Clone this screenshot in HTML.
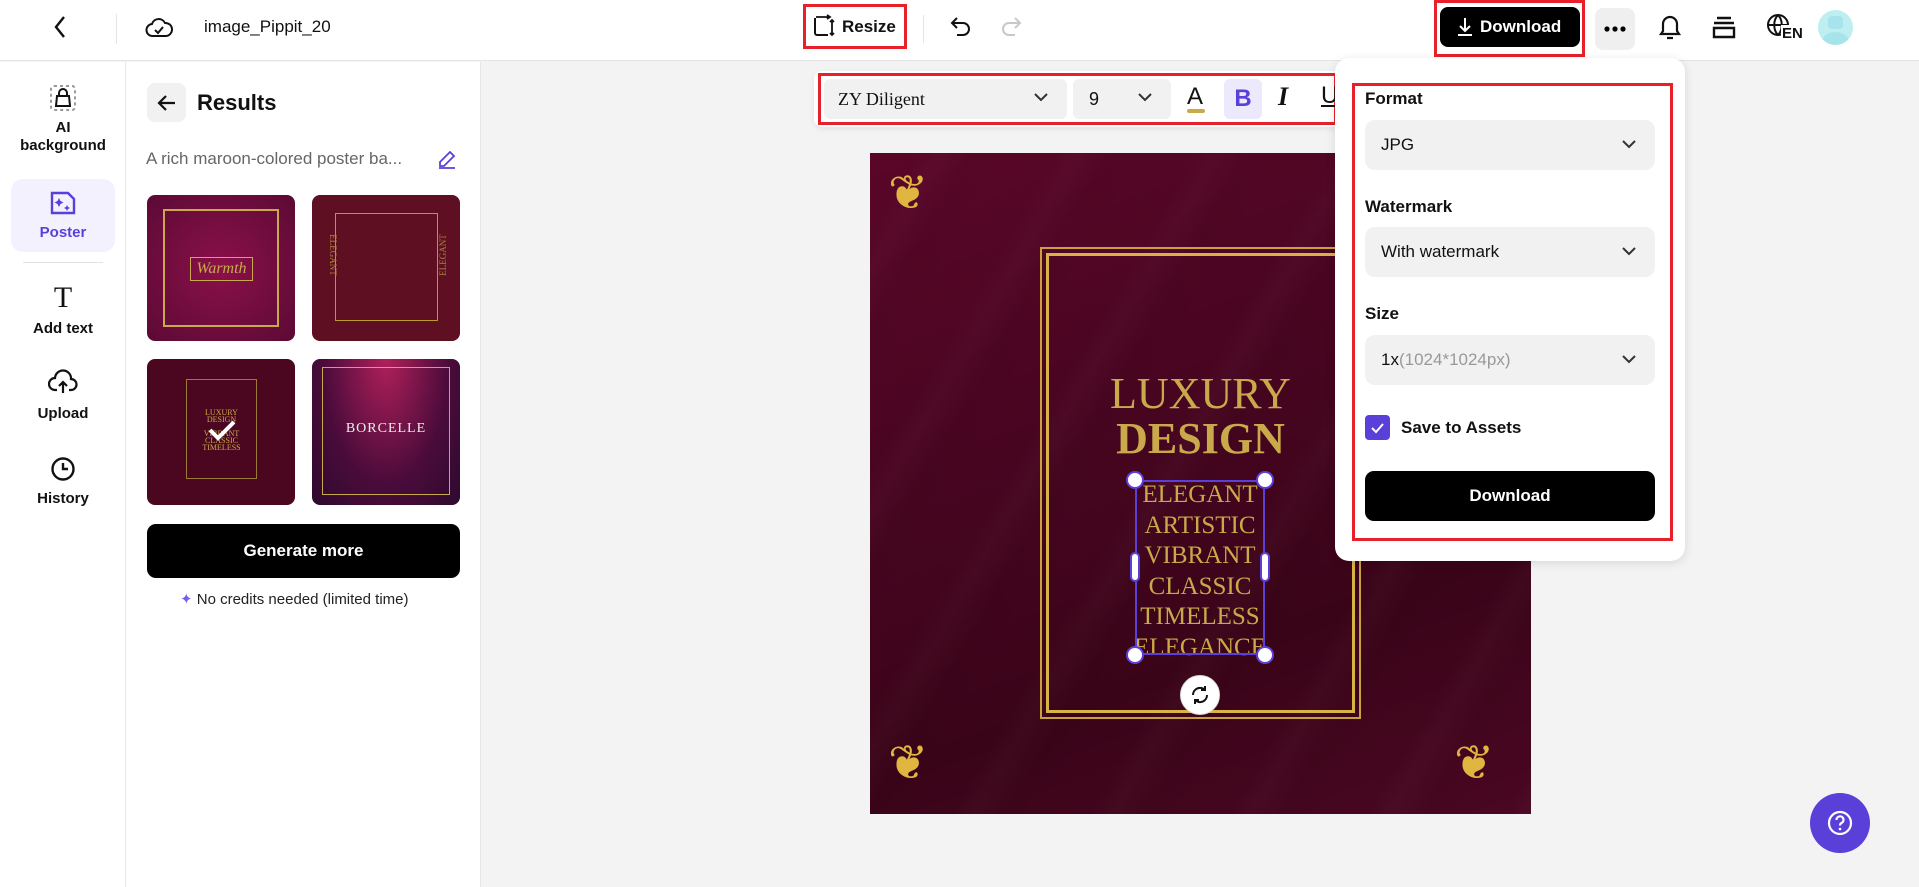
<!DOCTYPE html>
<html><head><meta charset="utf-8"><style>
*{box-sizing:border-box;margin:0;padding:0}
body{width:1919px;height:887px;overflow:hidden;background:#f3f3f3;font-family:"Liberation Sans",Arial,sans-serif;color:#111;position:relative}
.abs{position:absolute}
.top{left:0;top:0;width:1919px;height:61px;background:#fff;border-bottom:1px solid #e4e4e4}
.nav{left:0;top:62px;width:126px;height:825px;background:#fff;border-right:1px solid #e6e6e6}
.panel{left:126px;top:62px;width:355px;height:825px;background:#fff;border-right:1px solid #e6e6e6}
.navi{position:absolute;left:0;width:126px;text-align:center;font-size:15px;font-weight:bold;line-height:18px}
.red{position:absolute;border:3px solid #e8202a}
.sel{position:absolute;left:1365px;width:290px;height:50px;background:#f1f1f1;border-radius:10px;font-size:17px;padding:15px 0 0 16px}
.lbl{position:absolute;left:1365px;font-size:17px;font-weight:bold}
.chev{position:absolute;right:18px;top:18px}
.thumb{position:absolute;width:148px;height:146px;border-radius:8px;overflow:hidden}
.gold{color:#c9a94a;font-family:"Liberation Serif",serif;text-align:center}
</style></head><body>
<div class="abs top"></div>
<svg class="abs" style="left:52px;top:15px" width="16" height="24" viewBox="0 0 16 24"><path d="M12 2 L4 12 L12 22" fill="none" stroke="#111" stroke-width="2.4"/></svg>
<div class="abs" style="left:116px;top:14px;width:1px;height:30px;background:#e5e5e5"></div>
<svg class="abs" style="left:145px;top:14px" width="28" height="28" viewBox="0 0 28 28"><path d="M8 22 A6 6 0 0 1 7 10 A7 7 0 0 1 20 9 A6 6 0 0 1 21 22 Z" fill="none" stroke="#111" stroke-width="2"/><path d="M10 16 l3 3 l5 -6" fill="none" stroke="#111" stroke-width="2"/></svg>
<div class="abs" style="left:204px;top:17px;font-size:17px">image_Pippit_20</div>
<div class="red" style="left:803px;top:4px;width:104px;height:45px"></div>
<svg class="abs" style="left:812px;top:14px" width="24" height="24" viewBox="0 0 24 24"><path d="M3 4 v15 a2 2 0 0 0 2 2 h11" fill="none" stroke="#111" stroke-width="2"/><path d="M4 3 h14 M15 1 l3 2 l-3 2 M20 6 v15 M18 8 l2 -2 l2 2 M18 19 l2 2 l2 -2" fill="none" stroke="#111" stroke-width="1.8"/></svg>
<div class="abs" style="left:842px;top:17px;font-size:17px;font-weight:bold">Resize</div>
<div class="abs" style="left:923px;top:15px;width:1px;height:28px;background:#e5e5e5"></div>
<svg class="abs" style="left:949px;top:14px" width="24" height="24" viewBox="0 0 24 24"><path d="M8 4 L3 9 L8 14 M3 9 H14 a6 6 0 0 1 0 12 H8" fill="none" stroke="#111" stroke-width="2"/></svg>
<svg class="abs" style="left:999px;top:14px" width="24" height="24" viewBox="0 0 24 24"><path d="M16 4 L21 9 L16 14 M21 9 H10 a6 6 0 0 0 0 12 H16" fill="none" stroke="#c8c8c8" stroke-width="2"/></svg>
<div class="red" style="left:1434px;top:0;width:151px;height:57px"></div>
<div class="abs" style="left:1440px;top:7px;width:140px;height:40px;background:#000;border-radius:8px;color:#fff;font-size:17px;font-weight:bold;padding:10px 0 0 40px">Download</div>
<svg class="abs" style="left:1455px;top:16px" width="20" height="22" viewBox="0 0 20 22"><path d="M10 2 v13 M5 10 l5 5 l5 -5 M3 19 h14" fill="none" stroke="#fff" stroke-width="2"/></svg>
<div class="abs" style="left:1595px;top:8px;width:40px;height:42px;background:#efefef;border-radius:8px"></div>
<svg class="abs" style="left:1603px;top:25px" width="24" height="8" viewBox="0 0 24 8"><circle cx="4" cy="4" r="2.6"/><circle cx="12" cy="4" r="2.6"/><circle cx="20" cy="4" r="2.6"/></svg>
<svg class="abs" style="left:1656px;top:12px" width="28" height="30" viewBox="0 0 28 30"><path d="M5 22 h18 l-2 -3 v-7 a7 7 0 0 0 -14 0 v7 z M11 26 h6" fill="none" stroke="#111" stroke-width="2.2"/></svg>
<svg class="abs" style="left:1711px;top:15px" width="26" height="24" viewBox="0 0 26 24"><path d="M6 3 h14 M3 8 h20 M3 13 h20 v9 h-20 z" fill="none" stroke="#111" stroke-width="2.4"/></svg>
<svg class="abs" style="left:1765px;top:12px" width="28" height="30" viewBox="0 0 28 30"><circle cx="13" cy="13" r="10" fill="none" stroke="#111" stroke-width="2"/><path d="M3 13 h20 M13 3 c-5 5 -5 15 0 20 M13 3 c5 5 5 15 0 20" fill="none" stroke="#111" stroke-width="2"/></svg>
<div class="abs" style="left:1781px;top:25px;font-size:15px;font-weight:bold;background:#fff;padding:0 1px">EN</div>
<div class="abs" style="left:1818px;top:10px;width:35px;height:35px;border-radius:50%;background:#bfeef0;overflow:hidden"><div style="position:absolute;left:10px;top:6px;width:15px;height:13px;background:#a7e3ea;border-radius:4px"></div><div style="position:absolute;left:4px;top:22px;width:27px;height:20px;background:#a7e3ea;border-radius:50%"></div></div>

<div class="abs nav"></div>
<svg class="abs" style="left:49px;top:84px" width="28" height="28" viewBox="0 0 28 28"><rect x="2" y="2" width="24" height="24" rx="3" fill="none" stroke="#999" stroke-width="2" stroke-dasharray="3 3"/><path d="M8 12 h12 l1 10 h-14 z M10 12 v-3 a4 4 0 0 1 8 0 v3" fill="none" stroke="#111" stroke-width="2"/></svg>
<div class="navi" style="top:119px">AI<br>background</div>
<div class="abs" style="left:11px;top:179px;width:104px;height:73px;background:#f3f1fe;border-radius:12px"></div>
<svg class="abs" style="left:49px;top:190px" width="28" height="26" viewBox="0 0 28 26"><path d="M3 3 h16 l6 6 v14 h-22 z" fill="none" stroke="#5b3fd9" stroke-width="2.4"/><path d="M10 8 l1.5 3 l3 1.5 l-3 1.5 l-1.5 3 l-1.5 -3 l-3 -1.5 l3 -1.5z M18 15 l1 2 l2 1 l-2 1 l-1 2 l-1 -2 l-2 -1 l2 -1z" fill="#5b3fd9"/></svg>
<div class="navi" style="top:224px;color:#5b3fd9">Poster</div>
<div class="abs" style="left:23px;top:262px;width:80px;height:1px;background:#e3e3e3"></div>
<div class="navi" style="top:283px;font-size:30px;font-weight:normal;font-family:'Liberation Serif',serif;line-height:30px">T</div>
<div class="navi" style="top:320px">Add text</div>
<svg class="abs" style="left:48px;top:369px" width="30" height="26" viewBox="0 0 30 26"><path d="M9 21 h-2 a6 6 0 0 1 0 -12 a8 8 0 0 1 16 1 a5 5 0 0 1 0 11 h-2 M15 24 v-11 M11 17 l4 -4 l4 4" fill="none" stroke="#111" stroke-width="2.2"/></svg>
<div class="navi" style="top:405px">Upload</div>
<svg class="abs" style="left:50px;top:456px" width="26" height="26" viewBox="0 0 26 26"><circle cx="13" cy="13" r="10.5" fill="none" stroke="#111" stroke-width="2.4"/><path d="M13 7 v6 h5" fill="none" stroke="#111" stroke-width="2.4"/></svg>
<div class="navi" style="top:490px">History</div>

<div class="abs panel"></div>
<div class="abs" style="left:147px;top:83px;width:39px;height:39px;background:#f1f1f1;border-radius:8px"></div>
<svg class="abs" style="left:155px;top:91px" width="24" height="24" viewBox="0 0 24 24"><path d="M20 12 H4 M11 5 L4 12 L11 19" fill="none" stroke="#111" stroke-width="2.2"/></svg>
<div class="abs" style="left:197px;top:90px;font-size:22px;font-weight:bold">Results</div>
<div class="abs" style="left:146px;top:149px;font-size:17px;color:#666">A rich maroon-colored poster ba...</div>
<svg class="abs" style="left:437px;top:149px" width="20" height="20" viewBox="0 0 20 20"><path d="M3 17 v-4 l10 -10 l4 4 l-10 10 z M2 19 h16" fill="none" stroke="#5b3fd9" stroke-width="1.8"/></svg>
<div class="thumb" style="left:147px;top:195px;background:radial-gradient(circle,#8a1049,#5c0a35)"><div style="position:absolute;left:16px;top:14px;width:116px;height:118px;border:2px double #c9a94a"></div><div style="position:absolute;left:43px;top:62px;width:63px;height:24px;border:1px solid #c9a94a;color:#c9a94a;font:italic 16px 'Liberation Serif';text-align:center;line-height:22px">Warmth</div></div>
<div class="thumb" style="left:312px;top:195px;background:#5f0f22"><div style="position:absolute;left:23px;top:18px;width:103px;height:108px;border:1px solid #c0962f"></div><div style="position:absolute;left:0;top:55px;font:9px 'Liberation Serif';color:#a8863a;transform:rotate(90deg)">ELEGANT</div><div style="position:absolute;left:110px;top:55px;font:9px 'Liberation Serif';color:#a8863a;transform:rotate(-90deg)">ELEGANT</div></div>
<div class="thumb" style="left:147px;top:359px;background:#4b0720"><div style="position:absolute;left:39px;top:20px;width:71px;height:100px;border:1px solid #9a7a35"></div><div class="gold" style="position:absolute;left:39px;top:50px;width:71px;font-size:8px;line-height:7px">LUXURY<br>DESIGN<br><br>VIBRANT<br>CLASSIC<br>TIMELESS</div><svg style="position:absolute;left:60px;top:60px" width="30" height="22" viewBox="0 0 30 22"><path d="M3 11 l8 8 l16 -16" fill="none" stroke="#fff" stroke-width="4"/></svg></div>
<div class="thumb" style="left:312px;top:359px;background:radial-gradient(ellipse at 50% 0%,#b0205a,#4a0b3b 60%,#2d0a2e)"><div style="position:absolute;left:10px;top:8px;width:128px;height:128px;border:1px solid #c9a94a"></div><div style="position:absolute;left:0;top:62px;width:148px;text-align:center;color:#eee;font:14px 'Liberation Serif';letter-spacing:1px">BORCELLE</div></div>
<div class="abs" style="left:147px;top:524px;width:313px;height:54px;background:#000;border-radius:9px;color:#fff;font-size:17px;font-weight:bold;text-align:center;line-height:54px">Generate more</div>
<div class="abs" style="left:180px;top:590px;font-size:15px;color:#222"><span style="color:#7a5cf0">✦</span> No credits needed (limited time)</div>

<div class="abs" style="left:870px;top:153px;width:661px;height:661px;background:linear-gradient(160deg,#5a0628 0%,#470520 40%,#3a0418 70%,#4a0722 100%);overflow:hidden">
<div style="position:absolute;inset:0;background:repeating-linear-gradient(120deg,rgba(255,255,255,0) 0 40px,rgba(255,255,255,0.018) 60px,rgba(0,0,0,0.03) 90px,rgba(0,0,0,0) 120px)"></div>
<div style="position:absolute;left:170px;top:94px;width:321px;height:472px;border:2px solid #c9a23c"></div>
<div style="position:absolute;left:176px;top:100px;width:309px;height:460px;border:3px solid #d9b444"></div>
<div style="position:absolute;left:18px;top:12px;width:60px;height:60px;color:#e0b640;font-size:48px">❦</div>
<div style="position:absolute;left:18px;top:582px;width:60px;height:60px;color:#e0b640;font-size:48px">❦</div>
<div style="position:absolute;left:584px;top:582px;width:60px;height:60px;color:#e0b640;font-size:48px">❦</div>
<div class="gold" style="position:absolute;left:170px;top:218px;width:321px;font-size:44px;line-height:45px">LUXURY<br><b>DESIGN</b></div>
<div class="gold" style="position:absolute;left:230px;top:327px;width:200px;font-size:25px;line-height:30.5px">ELEGANT<br>ARTISTIC<br>VIBRANT<br>CLASSIC<br>TIMELESS<br>ELEGANCE</div>
</div>
<div class="abs" style="left:1135px;top:480px;width:130px;height:175px;border:2px solid #5b3fd9"></div>
<div class="abs" style="left:1126px;top:471px;width:18px;height:18px;border-radius:50%;background:#fff;border:2px solid #5b3fd9"></div>
<div class="abs" style="left:1256px;top:471px;width:18px;height:18px;border-radius:50%;background:#fff;border:2px solid #5b3fd9"></div>
<div class="abs" style="left:1126px;top:646px;width:18px;height:18px;border-radius:50%;background:#fff;border:2px solid #5b3fd9"></div>
<div class="abs" style="left:1256px;top:646px;width:18px;height:18px;border-radius:50%;background:#fff;border:2px solid #5b3fd9"></div>
<div class="abs" style="left:1130px;top:552px;width:10px;height:30px;border-radius:5px;background:#fff;border:2px solid #5b3fd9"></div>
<div class="abs" style="left:1260px;top:552px;width:10px;height:30px;border-radius:5px;background:#fff;border:2px solid #5b3fd9"></div>
<div class="abs" style="left:1180px;top:675px;width:40px;height:40px;border-radius:50%;background:#fff;border:1px solid #ddd"></div>
<svg class="abs" style="left:1189px;top:684px" width="22" height="22" viewBox="0 0 22 22"><path d="M4 11 a7 7 0 0 1 12 -5 M18 11 a7 7 0 0 1 -12 5 M16 2 v4 h-4 M6 20 v-4 h4" fill="none" stroke="#111" stroke-width="2"/></svg>

<div class="abs" style="left:814px;top:71px;width:540px;height:56px;background:#fff;border-radius:8px;box-shadow:0 2px 6px rgba(0,0,0,.08)"></div>
<div class="red" style="left:818px;top:73px;width:519px;height:52px"></div>
<div class="abs" style="left:824px;top:79px;width:243px;height:40px;background:#f1f1f1;border-radius:6px;font:18px 'Liberation Serif',serif;padding:10px 0 0 14px">ZY Diligent</div>
<svg class="abs" style="left:1033px;top:91px" width="16" height="12" viewBox="0 0 16 12"><path d="M2 3 l6 6 l6 -6" fill="none" stroke="#333" stroke-width="2"/></svg>
<div class="abs" style="left:1073px;top:79px;width:98px;height:40px;background:#f1f1f1;border-radius:6px;font-size:18px;padding:10px 0 0 16px">9</div>
<svg class="abs" style="left:1137px;top:91px" width="16" height="12" viewBox="0 0 16 12"><path d="M2 3 l6 6 l6 -6" fill="none" stroke="#333" stroke-width="2"/></svg>
<div class="abs" style="left:1187px;top:83px;font-size:24px">A</div>
<div class="abs" style="left:1187px;top:109px;width:18px;height:4px;background:#c9a94a;border-radius:2px"></div>
<div class="abs" style="left:1224px;top:79px;width:38px;height:40px;background:#ece9fd;border-radius:6px;color:#5b3fd9;font-size:24px;font-weight:bold;text-align:center;line-height:40px">B</div>
<div class="abs" style="left:1278px;top:82px;font:italic bold 26px 'Liberation Serif',serif">I</div>
<div class="abs" style="left:1321px;top:82px;font-size:24px;text-decoration:underline">U</div>

<div class="abs" style="left:1335px;top:58px;width:350px;height:503px;background:#fff;border-radius:14px;box-shadow:0 2px 10px rgba(0,0,0,.12)"></div>
<div class="red" style="left:1352px;top:83px;width:321px;height:458px"></div>
<div class="lbl" style="top:89px">Format</div>
<div class="sel" style="top:120px">JPG<svg class="chev" width="16" height="12" viewBox="0 0 16 12"><path d="M2 3 l6 6 l6 -6" fill="none" stroke="#333" stroke-width="2"/></svg></div>
<div class="lbl" style="top:197px">Watermark</div>
<div class="sel" style="top:227px">With watermark<svg class="chev" width="16" height="12" viewBox="0 0 16 12"><path d="M2 3 l6 6 l6 -6" fill="none" stroke="#333" stroke-width="2"/></svg></div>
<div class="lbl" style="top:304px">Size</div>
<div class="sel" style="top:335px">1x<span style="color:#999">(1024*1024px)</span><svg class="chev" width="16" height="12" viewBox="0 0 16 12"><path d="M2 3 l6 6 l6 -6" fill="none" stroke="#333" stroke-width="2"/></svg></div>
<div class="abs" style="left:1365px;top:415px;width:25px;height:25px;background:#5b3fd9;border-radius:4px"></div>
<svg class="abs" style="left:1369px;top:419px" width="17" height="17" viewBox="0 0 17 17"><path d="M3 9 l4 4 l7 -8" fill="none" stroke="#fff" stroke-width="2"/></svg>
<div class="abs" style="left:1401px;top:418px;font-size:17px;font-weight:bold">Save to Assets</div>
<div class="abs" style="left:1365px;top:471px;width:290px;height:50px;background:#000;border-radius:9px;color:#fff;font-size:17px;font-weight:bold;text-align:center;line-height:50px">Download</div>

<div class="abs" style="left:1810px;top:793px;width:60px;height:60px;border-radius:50%;background:#5b3fd9"></div>
<svg class="abs" style="left:1826px;top:809px" width="28" height="28" viewBox="0 0 28 28"><circle cx="14" cy="14" r="11" fill="none" stroke="#fff" stroke-width="2.2"/><path d="M10.5 11 a3.5 3.5 0 1 1 5 3 c-1.3 .7 -1.5 1.3 -1.5 2.5" fill="none" stroke="#fff" stroke-width="2.2"/><circle cx="14" cy="20" r="1.3" fill="#fff"/></svg>
</body></html>
